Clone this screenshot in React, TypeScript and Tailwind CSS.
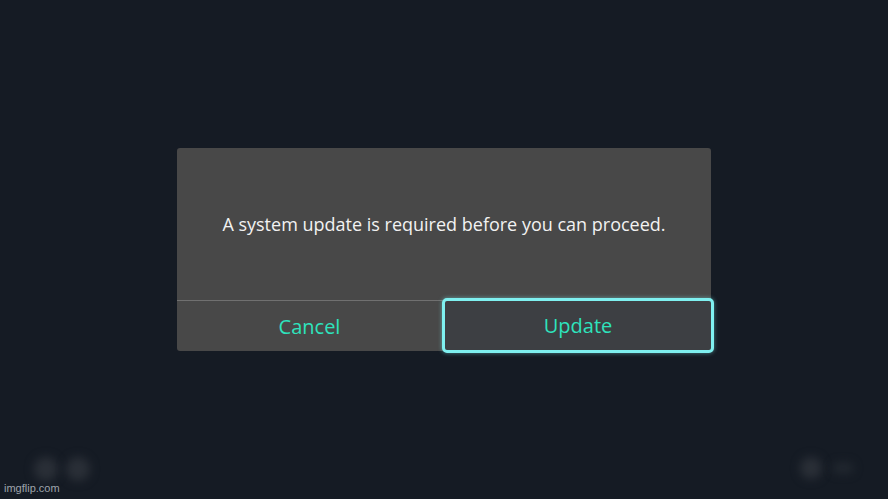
import React from "react"

const font = { fontFamily: '"Open Sans", "Noto Sans", sans-serif' }

export default function App() {
  return (
    <div
      className="relative flex h-[499px] w-[888px] flex-col overflow-hidden bg-[#151b24]"
      style={font}
    >
      <div className="flex flex-1 items-start pl-[177px] pt-[148px]">
        <div className="flex h-[203px] w-[534px] flex-col rounded-[3px] bg-[#484848]">
          <div className="flex h-[152px] items-center justify-center pt-[1px] text-[18px] text-[#f2f2f2]">
            A system update is required before you can proceed.
          </div>
          <div className="h-px bg-[#707070]" />
          <div className="grid flex-1 grid-cols-[265px_1fr]">
            <button className="flex items-center justify-center pt-[1px] text-[20px] text-[#2ee3bd]">
              Cancel
            </button>
            <div className="relative">
              <button className="absolute -bottom-[2px] -right-[3px] -top-[3px] left-0 flex items-center justify-center rounded-[5px] border-[3px] border-[#7ff0f0] bg-[#3d3f43] pt-[1px] text-[20px] text-[#2ee3bd] shadow-[0_0_4px_rgba(127,240,240,0.5)]">
                Update
              </button>
            </div>
          </div>
        </div>
      </div>

      {/* faint footer icons */}
      <div className="flex h-[50px] items-start justify-between px-[34px] pt-[8px]">
        <div className="flex gap-[8px]">
          <div className="h-[24px] w-[24px] rounded-full bg-[#2a2f37] blur-[5px]" />
          <div className="h-[24px] w-[24px] rounded-full bg-[#2a2f37] blur-[5px]" />
        </div>
        <div className="flex items-center gap-[10px]">
          <div className="h-[22px] w-[22px] rounded-full bg-[#2a2f37] blur-[5px]" />
          <div className="h-[12px] w-[22px] rounded-full bg-[#20262e] blur-[4px]" />
        </div>
      </div>

      <div
        className="absolute bottom-[3px] left-[4px] text-[11px] text-[#9ea4ab]"
        style={{ fontFamily: '"Liberation Sans", Arial, sans-serif' }}
      >
        imgflip.com
      </div>
    </div>
  )
}
